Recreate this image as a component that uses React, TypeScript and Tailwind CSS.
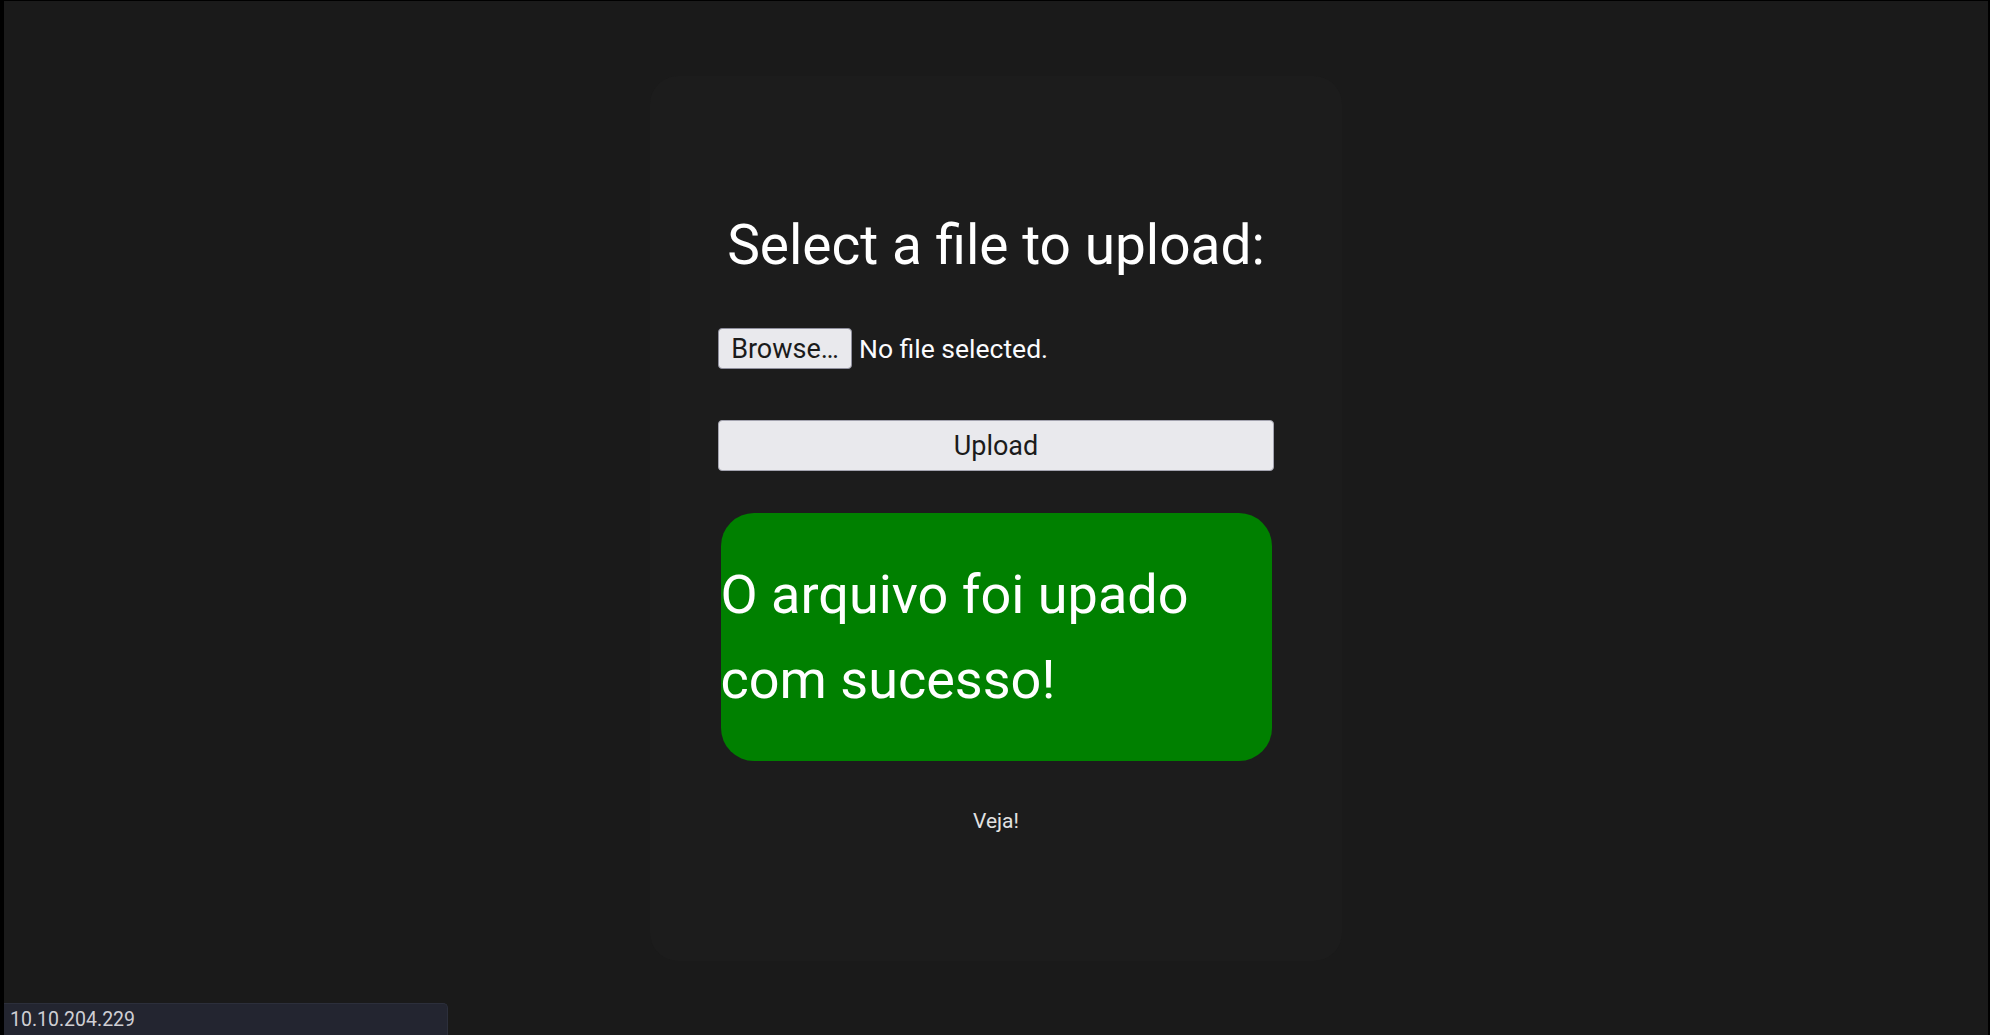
import React from "react";

const font = { fontFamily: "Roboto, 'Liberation Sans', sans-serif" };

function FileRow() {
  return (
    <div className="flex items-center gap-[7px]">
      <button
        type="button"
        className="h-[41px] w-[134px] rounded-[4px] border border-[#8f8f9d] bg-[#e9e9ed] pt-[2px] text-[27px] leading-none text-[#1b1b1b]"
      >
        Browse…
      </button>
      <span className="text-[26.5px] text-[#fbfbfe]">No file selected.</span>
    </div>
  );
}

export default function App() {
  return (
    <div
      className="relative flex h-screen w-full bg-black pl-[4px] pr-[2px] pt-[1px]"
      style={font}
    >
      <div className="flex flex-1 justify-center bg-[#1a1a1a]">
        <div className="mt-[75px] flex h-[885px] w-[692px] flex-col items-center rounded-[28px] bg-[#1c1c1c] pt-[136px]">
          <h1 className="text-[55px] leading-[66px] text-white">
            Select a file to upload:
          </h1>

          <div className="mt-[50px] flex w-[556px] flex-col">
            <FileRow />
            <button
              type="button"
              className="mt-[51px] h-[51px] w-full rounded-[4px] border border-[#a4a4b0] bg-[#e9e9ed] pt-[2px] text-[27px] leading-none text-[#1b1b1b]"
            >
              Upload
            </button>
          </div>

          <div className="mt-[42px] h-[248px] w-[551px] rounded-[33px] bg-[#008000] pt-[39px]">
            <p className="text-[54px] leading-[85px] text-white">
              O arquivo foi upado com sucesso!
            </p>
          </div>

          <a className="mt-[48px] text-[21px] leading-[25px] text-[#e2e2e2]">
            Veja!
          </a>
        </div>
      </div>

      <div className="absolute bottom-0 left-[4px] flex h-[32px] w-[444px] items-center rounded-tr-[5px] border-r border-t border-[#2c2f3b] bg-[#232530] pl-[6px] text-[19.5px] text-[#cfcfd4]">
        10.10.204.229
      </div>
    </div>
  );
}
